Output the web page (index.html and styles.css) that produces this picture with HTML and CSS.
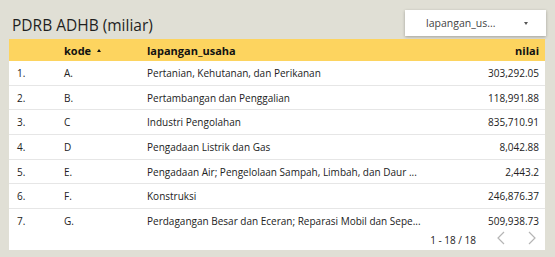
FILE: index.html
```html
<!DOCTYPE html>
<html>
<head>
<meta charset="utf-8">
<link rel="stylesheet" href="styles.css">
</head>
<body>
<div class="page">
  <div class="top">
    <div class="title">PDRB ADHB (miliar)</div>
    <div class="dropdown"><span class="dd-text">lapangan_us...</span><span class="dd-arrow"></span></div>
  </div>
  <div class="card">
    <div class="row head">
      <div class="c num"></div>
      <div class="c kode">kode <span class="sort"></span></div>
      <div class="c lap">lapangan_usaha</div>
      <div class="c val">nilai</div>
    </div>
    <div class="row"><div class="c num">1.</div><div class="c kode">A.</div><div class="c lap">Pertanian, Kehutanan, dan Perikanan</div><div class="c val">303,292.05</div></div>
    <div class="row"><div class="c num">2.</div><div class="c kode">B.</div><div class="c lap">Pertambangan dan Penggalian</div><div class="c val">118,991.88</div></div>
    <div class="row"><div class="c num">3.</div><div class="c kode">C</div><div class="c lap">Industri Pengolahan</div><div class="c val">835,710.91</div></div>
    <div class="row"><div class="c num">4.</div><div class="c kode">D</div><div class="c lap">Pengadaan Listrik dan Gas</div><div class="c val">8,042.88</div></div>
    <div class="row"><div class="c num">5.</div><div class="c kode">E.</div><div class="c lap">Pengadaan Air; Pengelolaan Sampah, Limbah, dan Daur ...</div><div class="c val">2,443.2</div></div>
    <div class="row"><div class="c num">6.</div><div class="c kode">F.</div><div class="c lap">Konstruksi</div><div class="c val">246,876.37</div></div>
    <div class="row last"><div class="c num">7.</div><div class="c kode">G.</div><div class="c lap">Perdagangan Besar dan Eceran; Reparasi Mobil dan Sepe...</div><div class="c val">509,938.73</div></div>
    <div class="footer">
      <span class="pages">1 - 18 / 18</span>
      <svg class="chev" width="10" height="14" viewBox="0 0 10 14"><polyline points="8,1 2,7 8,13" fill="none" stroke="#b5b5b5" stroke-width="1.2"/></svg>
      <svg class="chev" width="10" height="14" viewBox="0 0 10 14"><polyline points="2,1 8,7 2,13" fill="none" stroke="#b5b5b5" stroke-width="1.2"/></svg>
    </div>
  </div>
</div>
</body>
</html>
```

FILE: styles.css
```css
html, body {
  margin: 0;
  padding: 0;
  background: #e0dfd5;
}
body {
  width: 555px;
  height: 257px;
  overflow: hidden;
  font-family: "Open Sans", "Noto Sans", sans-serif;
  color: #222;
}
.page {
  padding: 10px 9px 0 9px;
  display: flex;
  flex-direction: column;
}
.top {
  display: flex;
  justify-content: space-between;
  align-items: flex-start;
  height: 29px;
  width: 537px;
}
.title {
  font-size: 15.5px;
  line-height: 20px;
  margin-top: 5px;
  margin-left: 3px;
  color: #1f1f1f;
}
.dropdown {
  width: 141px;
  height: 26px;
  background: #fff;
  box-shadow: 0 1px 3px rgba(0,0,0,0.28);
  display: flex;
  align-items: center;
  box-sizing: border-box;
  padding-left: 21px;
  padding-right: 18px;
  justify-content: space-between;
}
.dd-text {
  font-size: 10.5px;
  color: #444;
}
.dd-arrow {
  width: 0;
  height: 0;
  border-left: 2.5px solid transparent;
  border-right: 2.5px solid transparent;
  border-top: 3px solid #555;
}
.card {
  width: 536px;
  height: 211px;
  background: #fff;
  display: flex;
  flex-direction: column;
}
.row {
  display: grid;
  grid-template-columns: 54px 84px 285px 113px;
  height: 24.7px;
  box-sizing: border-box;
  border-bottom: 1px solid #e6e6e6;
  align-items: center;
  font-size: 10px;
  color: #222;
}
.row.last {
  border-bottom: none;
}
.row.head {
  height: 22px;
  background: #fdd45f;
  border-bottom: none;
  font-weight: 700;
  font-size: 11px;
  color: #111;
}
.c {
  white-space: nowrap;
}
.num {
  padding-left: 8px;
}
.val {
  text-align: right;
  padding-right: 6px;
}
.kode {
  display: flex;
  align-items: center;
  gap: 6px;
  padding-left: 1px;
}
.sort {
  width: 0;
  height: 0;
  border-left: 2.5px solid transparent;
  border-right: 2.5px solid transparent;
  border-bottom: 3px solid #111;
}
.footer {
  flex: 1;
  display: flex;
  align-items: flex-start;
  justify-content: flex-end;
  padding-right: 8px;
}
.pages {
  font-size: 10px;
  line-height: 10px;
  color: #222;
  margin-right: 20px;
  margin-top: 1px;
}
.chev {
  margin-top: -3px;
}
.chev + .chev {
  margin-left: 21px;
}
```
